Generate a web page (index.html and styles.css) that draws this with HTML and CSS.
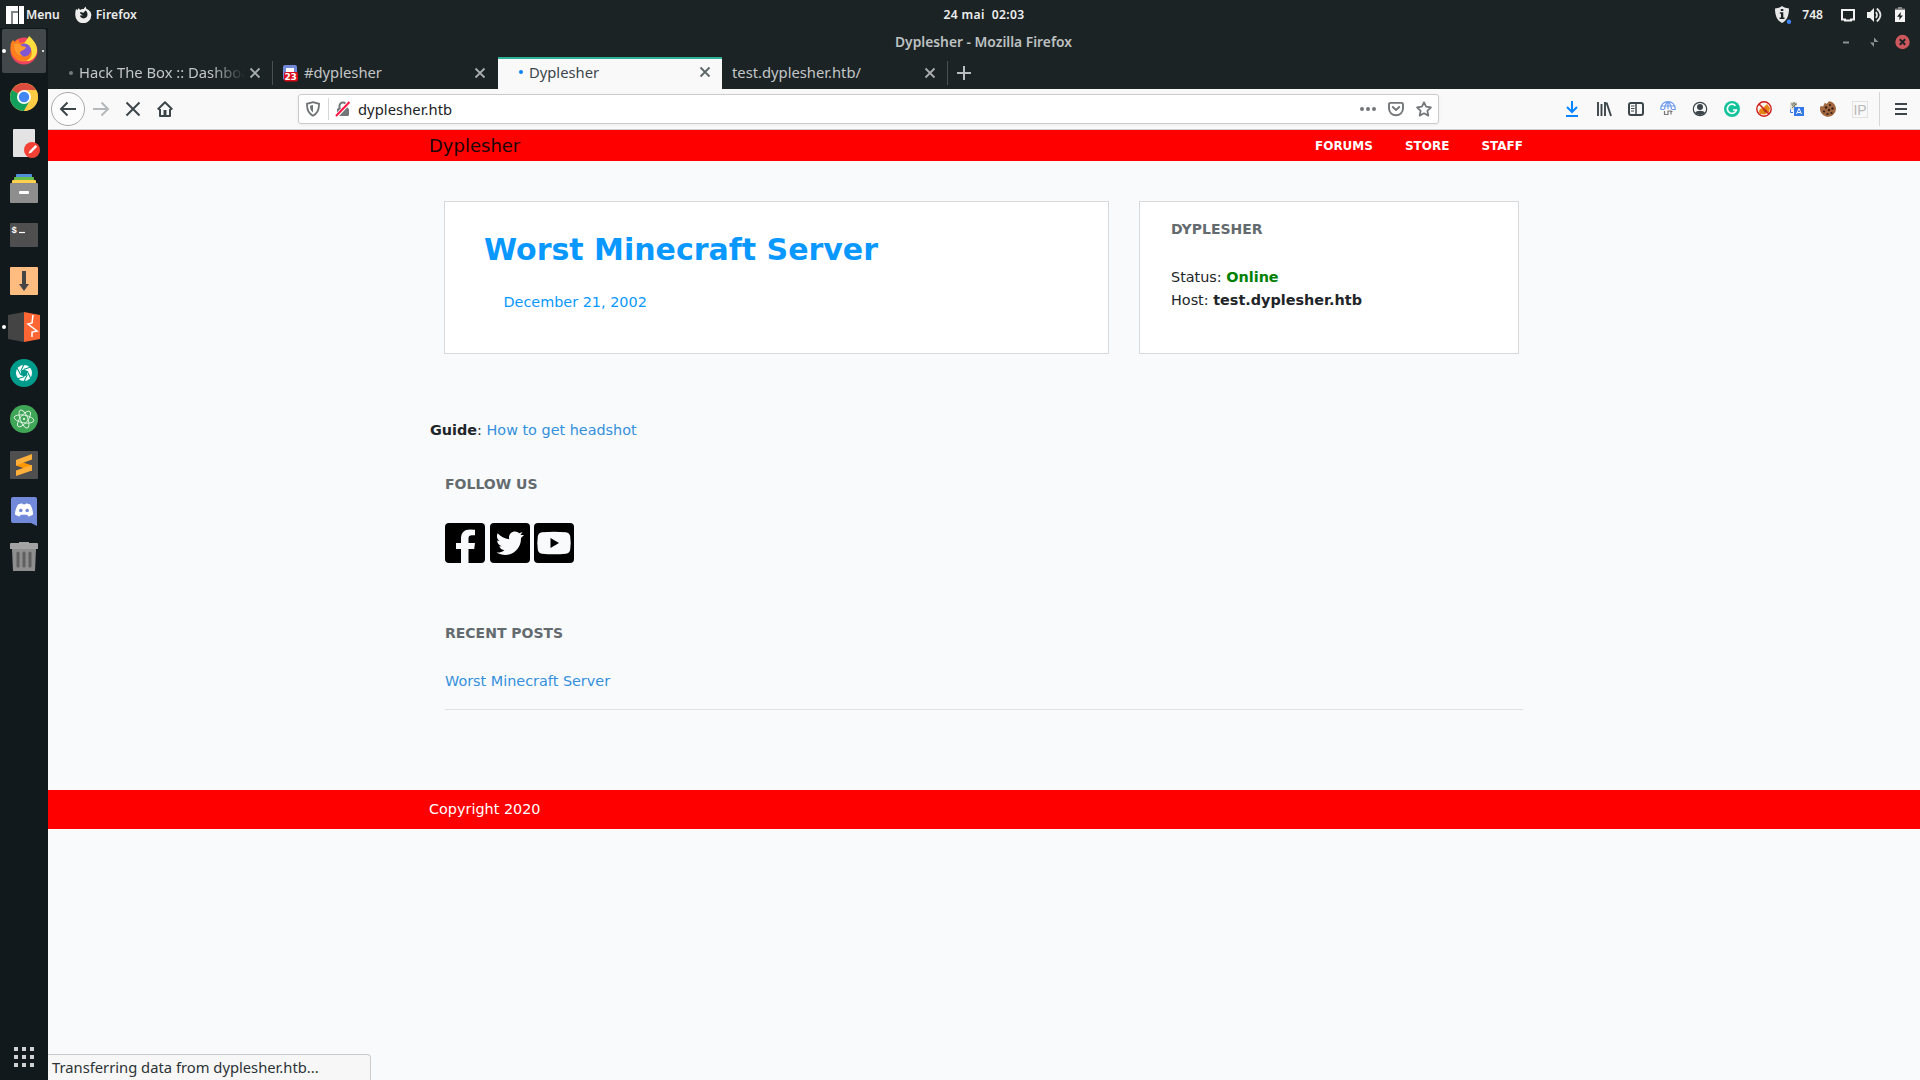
FILE: index.html
```html
<!DOCTYPE html>
<html lang="en">
<head>
<meta charset="utf-8">
<title>Dyplesher - Mozilla Firefox</title>
<link rel="stylesheet" href="styles.css">
</head>
<body>
<div class="desktop">
  <header class="topbar">
    <div class="top-left">
      <svg class="manjaro" width="18" height="18" viewBox="0 0 18 18"><path fill="#fff" d="M0 0h12v5H5v13H0z M6.500 6.500H12V18H6.500z M13 0h5v18h-5z"/><path fill="#7f8688" d="M5 5h7v1.500H6.500V18H5z"/></svg>
      <span class="menu-label">Menu</span>
      <svg class="top-fox" width="17" height="17" viewBox="0 0 17 17"><path fill="#eee" d="M1 3l1.500 1 1.200-2 1.400 2c1-.6 2-1 3.500-1L10.500.5l.8 2.200C15 4.200 16.500 6.500 16.300 9.500A8 8 0 0 1 .3 9C.2 7 .4 5 1 3z"/><path fill="#1c2325" d="M5 6l3.500.8 2-2.200c1 .6 2 1.800 2 4a4 4 0 0 1-4 3.800C6.500 12.300 5 11 5 9.500l3-.3L5.500 8z"/></svg>
      <span class="app-label">Firefox</span>
    </div>
    <div class="clock"><span>24 mai</span><span>02:03</span></div>
    <div class="top-right">
      <svg class="ic-shield" width="18" height="18" viewBox="0 0 18 18"><path fill="#e8e8e8" d="M8 0c2 1.500 4 2 7 2.500 0 7-2 12-7 14.500C3 14.500 1 9.500 1 2.500 4 2 6 1.500 8 0z"/><path fill="#1c2325" d="M6.800 3h2.500v2H6.800zM5.800 6.200h3.500v5.300h1.200V13H5.600v-1.500H7V7.700H5.800z"/><circle cx="15" cy="15.700" r="2.200" fill="#3d82f0"/></svg>
      <span class="count">748</span>
      <svg class="ic-screen" width="16" height="14" viewBox="0 0 16 14"><path d="M2 2h12v9.500h-3v1H5v-1H2z" fill="none" stroke="#f2f2f2" stroke-width="2"/></svg>
      <svg class="ic-vol" width="16" height="16" viewBox="0 0 16 16"><path fill="#f2f2f2" d="M1 5h3l4-4v14l-4-4H1z"/><path d="M10 5q2 3 0 6M10.800 1.500q7.400 6.500 0 13" fill="none" stroke="#e2e2e2" stroke-width="1.700"/></svg>
      <svg class="ic-bat" width="12" height="16" viewBox="0 0 12 16"><path fill="#888" d="M4 0h4v1.500h3V3H1V1.500h3z"/><path fill="#f4f4f4" d="M1 3h10v12H1z"/><path fill="#1c2325" d="M6.800 5L3 9.700h2.500L5.200 13 9 8.500H6.500z"/></svg>
    </div>
  </header>

  <aside class="dock">
    <div class="slot active"><i class="dot dot-left"></i><i class="dot dot-right"></i>
      <svg width="32" height="32" viewBox="0 0 32 32"><circle cx="16" cy="17" r="13.500" fill="#ed4560"/><path fill="#ff7f1f" d="M3 9l2-3 2 2 3-3 2 4 8-2 7 7c2 7-3 13.500-10.500 13.500C7 27.500.5 20 3 9z"/><path fill="#ffdf3e" d="M21 2c7 6 10 13 7 19-2 4-6 6.500-10 6 5-2 7-7 5-12-3-1-8-1-7-5 1-3 4-5 5-8z"/><circle cx="16.500" cy="16" r="6.500" fill="#8158cf"/><path fill="#ff9b2d" d="M6 10c3-1 6 0 8 2l4 1c-1 3-3 3-5 4-2 2 0 4 2 5-6 0-9-5-9-12z"/></svg></div>
    <div class="slot">
      <svg width="28" height="28" viewBox="0 0 28 28"><circle cx="14" cy="14" r="14" fill="#fc4"/><path fill="#dc4d3f" d="M14 14L1.900 7A14 14 0 0 1 26.100 7H14z"/><path fill="#12a05c" d="M14 14L1.900 7A14 14 0 0 0 14 28l6-10.500z"/><path fill="#fc4" d="M20 7h6.100A14 14 0 0 1 14 28l6-10.500z"/><circle cx="14" cy="14" r="7" fill="#fff"/><circle cx="14" cy="14" r="5.200" fill="#4285f4"/></svg></div>
    <div class="slot">
      <svg width="32" height="30" viewBox="0 0 32 30"><rect x="5" y="1" width="22" height="28" rx="1" fill="#e3e3e3"/><circle cx="24" cy="22" r="8" fill="#f34235"/><path d="M20.500 25.500l1-2.500 6-6 1.700 1.700-6 6z" fill="#fff"/></svg></div>
    <div class="slot raised">
      <svg width="28" height="30" viewBox="0 0 28 30"><rect x="6" y="1" width="16" height="5" rx="1" fill="#5190d8"/><rect x="4" y="4" width="20" height="5" rx="1" fill="#65bf4a"/><rect x="2" y="7" width="24" height="5" rx="1" fill="#ffd04d"/><rect y="10" width="28" height="20" rx="1" fill="#8e8e8e"/><rect x="9" y="18" width="10" height="3" rx="1" fill="#fff"/></svg></div>
    <div class="slot">
      <svg width="28" height="24" viewBox="0 0 28 24"><rect width="28" height="24" rx="1" fill="#4f4f4f"/><path d="M9 9.500h6" stroke="#fff" stroke-width="1.200"/><text x="1.500" y="9.500" class="prompt">$</text></svg></div>
    <div class="slot">
      <svg width="28" height="28" viewBox="0 0 28 28"><rect width="28" height="28" rx="1" fill="#ffbc80"/><path fill="#444" d="M12 4h4v13h3l-5 7-5-7h3z"/></svg></div>
    <div class="slot"><i class="dot dot-left"></i>
      <svg width="32" height="30" viewBox="0 0 32 30"><path fill="#444" d="M0 3l16-3v30L0 27z"/><path fill="#ff6633" d="M16 0l16 3v24l-16 3z"/><path d="M25 3l-1 8-4 1 9 7-5 1v5" fill="none" stroke="#fff" stroke-width="1.500"/></svg></div>
    <div class="slot">
      <svg width="28" height="28" viewBox="0 0 28 28"><circle cx="14" cy="14" r="14" fill="#009c8b"/><circle cx="14" cy="14" r="8" fill="#fff"/><path d="M14 10.300l3.200 1.800v3.800L14 17.700l-3.200-1.800v-3.800z" fill="#009c8b"/><path d="M14 10.300L21 8M17.200 12.100L20.500 19M17.200 15.900L14 22.500M14 17.700L7 20M10.800 15.900L7 9M10.800 12.100L14 5.500" stroke="#009c8b" stroke-width="1.100"/></svg></div>
    <div class="slot">
      <svg width="28" height="28" viewBox="0 0 28 28"><circle cx="14" cy="14" r="14" fill="#40a657"/><g fill="none" stroke="#e5f3e7" stroke-width=".9"><ellipse cx="14" cy="14" rx="10" ry="3.800" transform="rotate(10 14 14)"/><ellipse cx="14" cy="14" rx="9.500" ry="3.800" transform="rotate(68 14 14)"/><ellipse cx="14" cy="14" rx="9.500" ry="3.800" transform="rotate(128 14 14)"/></g><circle cx="14" cy="14" r="1.100" fill="#fff"/></svg></div>
    <div class="slot">
      <svg width="28" height="28" viewBox="0 0 28 28"><rect width="28" height="28" rx="1" fill="#4f4f4f"/><path fill="#ff9800" d="M6 9l16 5.500V20L6 14.500z"/><path fill="#ffb03b" d="M6 9l16-6v5.500L6 14.500zM6 19.500l16-5.500v5.500L6 25z"/></svg></div>
    <div class="slot">
      <svg width="28" height="30" viewBox="0 0 28 30"><path fill="#7289da" d="M3 1h22a2 2 0 0 1 2 2v27l-6-3H3a2 2 0 0 1-2-2V3a2 2 0 0 1 2-2z"/><path fill="#fff" d="M8 8.500l4-1.200.6 1h3l.6-1 4 1.200c2 3.500 3 7 2.800 10-1.500 1.200-3 1.800-4.500 2l-1.300-1.800h-6.400L9.500 20.500c-1.500-.2-3-.8-4.500-2-.2-3 1-6.500 3-10z"/><g fill="#7289da"><circle cx="10.800" cy="14.500" r="1.800"/><circle cx="17.200" cy="14.500" r="1.800"/></g></svg></div>
    <div class="slot raised">
      <svg width="28" height="30" viewBox="0 0 28 30"><path fill="#a3a3a3" d="M1 2h8V1h10v1h8a1 1 0 0 1 1 1v5H0V3a1 1 0 0 1 1-1z"/><path fill="#8e8e8e" d="M2 8h24l-1 22H3z"/><path d="M8 12v13M14 12v13M20 12v13" stroke="#606060" stroke-width="3" stroke-linecap="round"/></svg></div>
    <div class="apps"><i></i><i></i><i></i><i></i><i></i><i></i><i></i><i></i><i></i></div>
  </aside>

  <div class="window">
    <div class="titlebar">
      <span class="title">Dyplesher - Mozilla Firefox</span>
      <div class="winbtns">
        <svg width="8" height="16" viewBox="0 0 8 16"><path d="M1 8.500h6" stroke="#8d9394" stroke-width="2"/></svg>
        <svg width="10" height="16" viewBox="0 0 10 16"><path fill="#8d9394" d="M5 3.500V8h4.500zM1 8.500h4V13z"/></svg>
        <svg width="15" height="16" viewBox="0 0 15 16"><circle cx="7.500" cy="8" r="7.200" fill="#cc575d"/><path d="M4.800 5.300l5.400 5.400M10.200 5.300l-5.400 5.400" stroke="#1c2325" stroke-width="2"/></svg>
      </div>
    </div>
    <nav class="tabs">
      <div class="tab first"><i class="busy"></i><span class="label faded">Hack The Box :: Dashboard</span><svg class="x" width="12" height="12" viewBox="0 0 12 12"><path d="M1.500 1.500l9 9M10.500 1.500l-9 9"/></svg></div>
      <div class="tab second"><svg class="fav" width="15" height="17" viewBox="0 0 15 17"><rect width="14" height="15" rx="2" fill="#7289da"/><path d="M3 3h8v4H3z" fill="#fff"/><rect x="1" y="7" width="14" height="9.500" rx="2" fill="#d80c18"/><text x="1.500" y="15" class="badge">23</text></svg><span class="label">#dyplesher</span><svg class="x" width="12" height="12" viewBox="0 0 12 12"><path d="M1.500 1.500l9 9M10.500 1.500l-9 9"/></svg></div>
      <div class="tab current"><i class="busy"></i><span class="label">Dyplesher</span><svg class="x" width="12" height="12" viewBox="0 0 12 12"><path d="M1.500 1.500l9 9M10.500 1.500l-9 9"/></svg></div>
      <div class="tab fourth"><span class="label">test.dyplesher.htb/</span><svg class="x" width="12" height="12" viewBox="0 0 12 12"><path d="M1.500 1.500l9 9M10.500 1.500l-9 9"/></svg></div>
      <svg class="plus" width="14" height="14" viewBox="0 0 14 14"><path d="M7 0v14M0 7h14" stroke="#b9bcbd" stroke-width="2"/></svg>
    </nav>
    <div class="toolbar">
      <div class="navbtns">
        <span class="back"><svg width="18" height="16" viewBox="0 0 18 16"><path d="M17 8H2M8.500 1.500L2 8l6.500 6.500" fill="none" stroke="#3c464a" stroke-width="2"/></svg></span>
        <svg width="18" height="16" viewBox="0 0 18 16"><path d="M1 8h15M9.500 1.500L16 8l-6.500 6.500" fill="none" stroke="#b5b9ba" stroke-width="2"/></svg>
        <svg width="16" height="16" viewBox="0 0 16 16"><path d="M1.500 1.500l13 13M14.500 1.500l-13 13" stroke="#3c464a" stroke-width="2"/></svg>
        <svg class="home" width="16" height="16" viewBox="0 0 16 16"><path d="M.7 8.500L8 1.300l7.300 7.200M3 8v7h10V8" fill="none" stroke="#3c464a" stroke-width="2" stroke-linejoin="round"/><path d="M6.500 9h3v6h-3z" fill="#3c464a"/></svg>
      </div>
      <div class="urlbar">
        <svg width="14" height="16" viewBox="0 0 14 16"><path d="M7 1.200L13 2.800c.2 6-1.600 9.800-6 12-4.400-2.200-6.200-6-6-12z" fill="none" stroke="#6e7376" stroke-width="1.800"/><path d="M7 4v7.500C4.500 9.500 4 7.500 4 4.700z" fill="#6e7376"/></svg>
        <i class="sep"></i>
        <svg width="16" height="16" viewBox="0 0 16 16"><path d="M4.500 8V5a3.500 3.500 0 0 1 7 0v3" fill="none" stroke="#737779" stroke-width="2"/><rect x="2" y="7" width="12" height="8" rx="1.500" fill="#737779"/><path d="M1 15.500L14.500 1" stroke="#fff" stroke-width="4"/><path d="M1 15L14.500 1" stroke="#ff1744" stroke-width="2"/></svg>
        <span class="url">dyplesher.htb</span>
        <svg class="dots3" width="16" height="16" viewBox="0 0 16 16"><g fill="#73777a"><circle cx="2" cy="8" r="2"/><circle cx="8" cy="8" r="2"/><circle cx="14" cy="8" r="2"/></g></svg>
        <svg width="16" height="16" viewBox="0 0 16 16"><path d="M2.500 1.900h11q1.500 0 1.500 1.500V7.500A7 6.800 0 0 1 1 7.500V3.400q0-1.500 1.500-1.500zM4.800 6L8 9l3.200-3" fill="none" stroke="#73777a" stroke-width="1.900" stroke-linecap="round" stroke-linejoin="round"/></svg>
        <svg width="16" height="16" viewBox="0 0 16 16"><path d="M8 1.300l2.100 4.400 4.800.7-3.500 3.400.9 4.800L8 12.300l-4.300 2.300.9-4.800L1.100 6.400l4.800-.7z" fill="none" stroke="#73777a" stroke-width="1.800" stroke-linejoin="round"/></svg>
      </div>
      <div class="exts">
        <svg width="16" height="16" viewBox="0 0 16 16"><path d="M8 0v10.500M3 6l5 5 5-5M2 15h12" fill="none" stroke="#0a84ff" stroke-width="2"/></svg>
        <svg width="16" height="16" viewBox="0 0 16 16"><path d="M2 1v14M5.500 3v12M9 1v14M10.500 1.500L15 15" fill="none" stroke="#3c464a" stroke-width="1.900"/></svg>
        <svg width="16" height="16" viewBox="0 0 16 16"><rect x="1" y="2" width="14" height="12" rx="2" fill="none" stroke="#3c464a" stroke-width="2"/><path d="M8 2v12" stroke="#3c464a" stroke-width="1.500"/><path d="M3 5h3.500M3 7.500h3.500M3 10h3" stroke="#3c464a"/></svg>
        <svg width="16" height="16" viewBox="0 0 16 16"><path d="M.8 8.500C0-2 16-2 15.200 8.500H12M.8 8.500H4M8 .8V8M4.500 8.500Q5 3 8 .8q3 2.200 3.500 7.700M1.500 5h13" fill="none" stroke="#6f9bea" stroke-width="1.200"/><path d="M4.500 10v3.500H8V10h3v3.500M10 10.500h2.500" fill="none" stroke="#777" stroke-width="1.200"/></svg>
        <svg width="16" height="16" viewBox="0 0 16 16"><circle cx="8" cy="8" r="6.700" fill="none" stroke="#3c464a" stroke-width="1.200"/><circle cx="8" cy="6" r="3" fill="#3c464a"/><path d="M3 12c1-3 9-3 10 0-2 2.500-8 2.500-10 0z" fill="#3c464a"/></svg>
        <svg width="16" height="16" viewBox="0 0 16 16"><circle cx="8" cy="8" r="8" fill="#15c39a"/><path d="M11.500 4.800A4.600 4.600 0 1 0 12.400 9H9" fill="none" stroke="#fff" stroke-width="1.600"/></svg>
        <svg width="16" height="16" viewBox="0 0 16 16"><circle cx="8" cy="8" r="7.200" fill="#fbf4ea"/><path d="M3 11c0-3 2-4 4-4l4-4 3 4-1 4-4 2.500-5-.5z" fill="#e88615"/><path d="M7 9l3-1 1 2-2 2z" fill="#9a560f"/><circle cx="8" cy="8" r="7.200" fill="none" stroke="#cf1b1b" stroke-width="1.400"/><path d="M3 3l10 10" stroke="#cf1b1b" stroke-width="1.500"/></svg>
        <svg width="16" height="16" viewBox="0 0 16 16"><path d="M2 1h7v8H2z" fill="#e4e2d8"/><path d="M3 3h6M6 1v2M4 7l4-4M4 4l4 3" stroke="#6d6d60"/><rect x="6" y="6" width="10" height="9" fill="#3478e8"/><path d="M8.500 13L11 7.500l2.500 5.500M9.500 11.500h3" stroke="#fff" fill="none"/><path d="M2.500 8.500v3H5" stroke="#3478e8" fill="none"/></svg>
        <svg width="16" height="16" viewBox="0 0 16 16"><path fill="#a2673f" d="M5 1.500L6.500 3 9 .3C13 .8 16 4 16 8A8 8 0 1 1 .5 5L3 5.500z"/><g fill="#392018"><circle cx="6" cy="6.500" r="1.200"/><circle cx="10" cy="4" r="1.100"/><circle cx="12.500" cy="7.500" r="1.200"/><circle cx="9" cy="9" r="1.200"/><circle cx="4" cy="10.500" r="1.100"/><circle cx="7.500" cy="13" r="1.100"/><circle cx="11.500" cy="12" r="1.100"/></g></svg>
        <span class="ip">IP</span>
      </div>
      <i class="tb-sep"></i>
      <svg class="burger" width="12" height="14" viewBox="0 0 12 14"><path d="M0 2h12M0 7h12M0 12h12" stroke="#3c464a" stroke-width="2"/></svg>
    </div>

    <main class="page">
      <div class="site-head"><div class="inner"><span class="brand">Dyplesher</span><div class="links"><a>FORUMS</a><a>STORE</a><a>STAFF</a></div></div></div>
      <div class="cards">
        <section class="card post"><h1>Worst Minecraft Server</h1><p>December 21, 2002</p></section>
        <section class="card server"><h2>DYPLESHER</h2><p>Status: <b class="on">Online</b></p><p>Host: <b>test.dyplesher.htb</b></p></section>
      </div>
      <p class="guide"><b>Guide</b>: <a>How to get headshot</a></p>
      <section class="follow"><h2>FOLLOW US</h2>
        <div class="social">
          <svg width="40" height="40" viewBox="0 0 40 40"><rect width="40" height="40" rx="4"/><path fill="#f8fafc" d="M16 40V26h-5v-6h5v-4.500C16 9.500 19.500 6.500 25 6.500q3 0 5 .3v5.500h-3c-2.500 0-3.500 1.200-3.500 3.200V20H30l-.8 6h-5.700v14z"/></svg>
          <svg width="40" height="40" viewBox="0 0 40 40"><rect width="40" height="40" rx="4"/><path fill="#f8fafc" d="M34 12l-3 3c.3 9-6 17-15.500 17-3.500 0-6.500-1-9-2.500 3 .2 5.700-.6 8-2.300-2.600-.2-4.500-1.700-5.200-4h2.400c-2.800-.8-4.500-3-4.500-5.700l2.400.6C7 16.200 6.200 13.200 7.700 10.300c3 3.500 6.700 5.500 11.500 5.900C18.200 12 21 8.500 25 8.500c1.700 0 3.100.7 4.100 1.800l3.500-1.400-2.200 3z"/></svg>
          <svg width="40" height="40" viewBox="0 0 40 40"><rect width="40" height="40" rx="4"/><path fill="#f8fafc" d="M8 9.300q12-1.300 24 0 3.600.4 4.200 4 1 6.700 0 13.400-.6 3.600-4.200 4-12 1.300-24 0-3.600-.4-4.200-4-1-6.700 0-13.400.6-3.600 4.200-4z"/><path d="M16.500 15l8.500 5-8.500 5z"/></svg>
        </div>
      </section>
      <section class="recent"><h2>RECENT POSTS</h2><a>Worst Minecraft Server</a></section>
      <footer class="site-foot"><span>Copyright 2020</span></footer>
    </main>
    <div class="statusbar">Transferring data from dyplesher.htb...</div>
  </div>
</div>
</body>
</html>
```
FILE: styles.css
```css
* { box-sizing: border-box; }
body { margin: 0; }
svg { display: block; flex: none; }
h1, h2, p { margin: 0; }

.desktop {
  width: 1920px;
  height: 1080px;
  overflow: hidden;
  display: grid;
  grid-template: 28px 1052px / 48px 1872px;
  background: #1c2325;
  font: 14.760px/20px "Noto Sans", sans-serif;
}

/* Panel */
.topbar {
  grid-column: 1 / 3;
  display: grid;
  grid-template-columns: 1fr auto 1fr;
  align-items: center;
  padding-top: 1px;
  color: #eceeee;
  font-size: 12.100px;
  font-weight: 600;
}
.top-left, .top-right { display: flex; align-items: center; }
.top-left { padding-left: 6px; }
.menu-label { margin-left: 2px; }
.top-fox { margin: 0 4px 0 15px; }
.app-label { letter-spacing: .1px; }
.clock { display: flex; gap: 7px; padding-left: 48px; letter-spacing: .35px; }
.top-right { justify-content: flex-end; padding-right: 14px; }
.count { margin: 0 17px 0 10px; }
.ic-vol { margin: 0 12px 0 10px; }

/* Dock */
.dock { background: #12191c; display: flex; flex-direction: column; }
.slot { position: relative; height: 46px; flex: none; display: flex; align-items: center; justify-content: center; }
.slot.raised { padding-bottom: 2px; }
.slot.active { height: 44px; margin: 1px 2px; padding-bottom: 2px; background: #43484a; border-radius: 2px; }
.dot { position: absolute; border-radius: 50%; background: #fff; }
.dot-left { left: 2px; top: 21px; width: 4px; height: 4px; }
.active .dot-left { left: 0; top: 20px; }
.dot-right { right: 2px; top: 21px; width: 2px; height: 2px; }
.prompt { font: bold 9px "Liberation Mono", monospace; fill: #fff; }
.apps {
  margin: auto auto 13px;
  display: grid;
  grid-template-columns: repeat(3, 4px);
  grid-auto-rows: 4px;
  gap: 4px;
}
.apps i { background: #d0d1d2; }

/* Window chrome */
.window { position: relative; display: flex; flex-direction: column; }
.titlebar {
  height: 33px;
  flex: none;
  display: flex;
  align-items: flex-start;
  padding: 4px 10px 0 847px;
}
.title { font-size: 13.800px; font-weight: 600; color: #bdc1c2; line-height: 20px; white-space: nowrap; }
.winbtns { margin-left: auto; display: flex; align-items: center; gap: 18px; padding-top: 2px; }
.winbtns svg:first-child { margin-right: 1px; }
.winbtns svg:last-child { margin-left: -2px; }
.tabs { height: 28px; flex: none; display: flex; color: #c3c6c7; }
.tab { width: 225px; height: 24px; display: flex; align-items: center; padding-right: 11px; border-right: 1px solid #4a5052; white-space: nowrap; }
.tab .label { flex: 1; overflow: hidden; line-height: 22px; padding-bottom: 2px; }
.x { fill: none; stroke: #aaadae; stroke-width: 1.800; }
.tab.first { padding-left: 21px; }
.busy { width: 4px; height: 4px; border-radius: 50%; background: #74797a; flex: none; margin-right: 6px; }
.faded { -webkit-mask-image: linear-gradient(90deg, #000 80%, transparent 100%); mask-image: linear-gradient(90deg, #000 80%, transparent 100%); margin-right: 4px; }
.tab.second { padding-left: 10px; border-right-color: transparent; }
.fav { margin-right: 6px; }
.badge { font: bold 9px "DejaVu Sans", sans-serif; fill: #fff; letter-spacing: -.3px; }
.tab.current { width: 224px; height: 33px; margin-top: -4px; border: 0; border-top: 2px solid #2eb398; background: #f9f9fa; color: #3c464a; padding: 0 11px 5px 21px; }
.tab.current .label { padding-bottom: 1px; }
.tab.current .busy { background: #0a84ff; }
.tab.current .x { stroke: #5c6467; }
.tab.fourth { padding-left: 10px; width: 226px; padding-right: 11px; }
.plus { margin: 5px 0 0 9px; }
.toolbar {
  height: 41px;
  flex: none;
  display: flex;
  align-items: center;
  background: #f9f9fa;
  border-bottom: 1px solid #ccc;
}
.navbtns { display: flex; align-items: center; gap: 15px; width: 250px; padding-left: 3px; }
.back { width: 34px; height: 34px; border: 1px solid #aaa; border-radius: 50%; background: #fdfdfd; display: grid; place-items: center; margin-right: -8px; }
.home { margin-left: 1px; }
.urlbar { width: 1141px; height: 30px; border: 1px solid #ccc; border-radius: 3px; background: #fff; display: flex; align-items: center; padding: 0 6px 0 7px; box-shadow: 0 1px 3px rgba(0, 0, 0, .06); }
.sep { width: 1px; height: 22px; background: #d6d6d6; margin: 0 6px 0 8px; }
.url { flex: 1; margin-left: 7px; color: #1c2325; letter-spacing: .05px; }
.urlbar .dots3 { margin-right: 12px; }
.urlbar .dots3 + svg { margin-right: 12px; }
.exts { display: flex; align-items: center; gap: 16px; margin-left: 125px; }
.ip { width: 16px; height: 17px; border: 1px solid #e2e2e2; color: #b8b8b8; font: 14px/16px "Liberation Sans", sans-serif; display: flex; justify-content: center; }
.tb-sep { width: 1px; height: 34px; background: #d5d5d5; margin: 0 15px 0 11px; }

/* Page */
.page { flex: 1; background: #f8fafc; color: #212529; font: 14.400px/23px "DejaVu Sans", sans-serif; }
.site-head { height: 31px; background: #f00; padding: 0 397px 0 381px; }
.inner { height: 31px; display: flex; justify-content: space-between; align-items: center; }
.brand { font-size: 18px; color: #1a0606; }
.links { display: flex; gap: 32px; padding-top: 2px; font-size: 12px; font-weight: bold; color: #fff; }
.cards { display: flex; gap: 30px; padding: 40px 0 0 396px; }
.card { height: 153px; background: #fff; border: 1px solid #d8d9da; }
.post { width: 665px; padding: 30px 39px; color: #0998ff; }
.post h1 { font-size: 30px; line-height: 36px; }
.post p { margin: 23px 0 0 19.500px; }
.server { width: 380px; padding: 16px 31px; }
h2 { font-size: 14px; line-height: 23px; color: #636b6f; }
.server h2 { margin-bottom: 25px; }
.on { color: green; }
.guide { margin: 65px 0 0 382px; }
.page a { color: #3490dc; }
.page .links a { color: #fff; }
.follow { margin: 31px 0 0 397px; }
.social { display: flex; gap: 4.500px; margin-top: 27px; }
.recent { margin: 59px 397px 0; height: 88px; border-bottom: 1px solid #dfe1e3; }
.recent h2 { margin-bottom: 25px; }
.site-foot { margin-top: 80px; height: 39px; padding: 8px 381px; background: #f00; color: #fff; }
.statusbar { position: absolute; left: 0; bottom: 0; width: 323px; height: 26px; padding: 2px 4px; background: #f7f7f7; border: 1px solid #ccc; border-width: 1px 1px 0 0; border-radius: 0 4px 0 0; color: #2b3336; white-space: nowrap; }
```
